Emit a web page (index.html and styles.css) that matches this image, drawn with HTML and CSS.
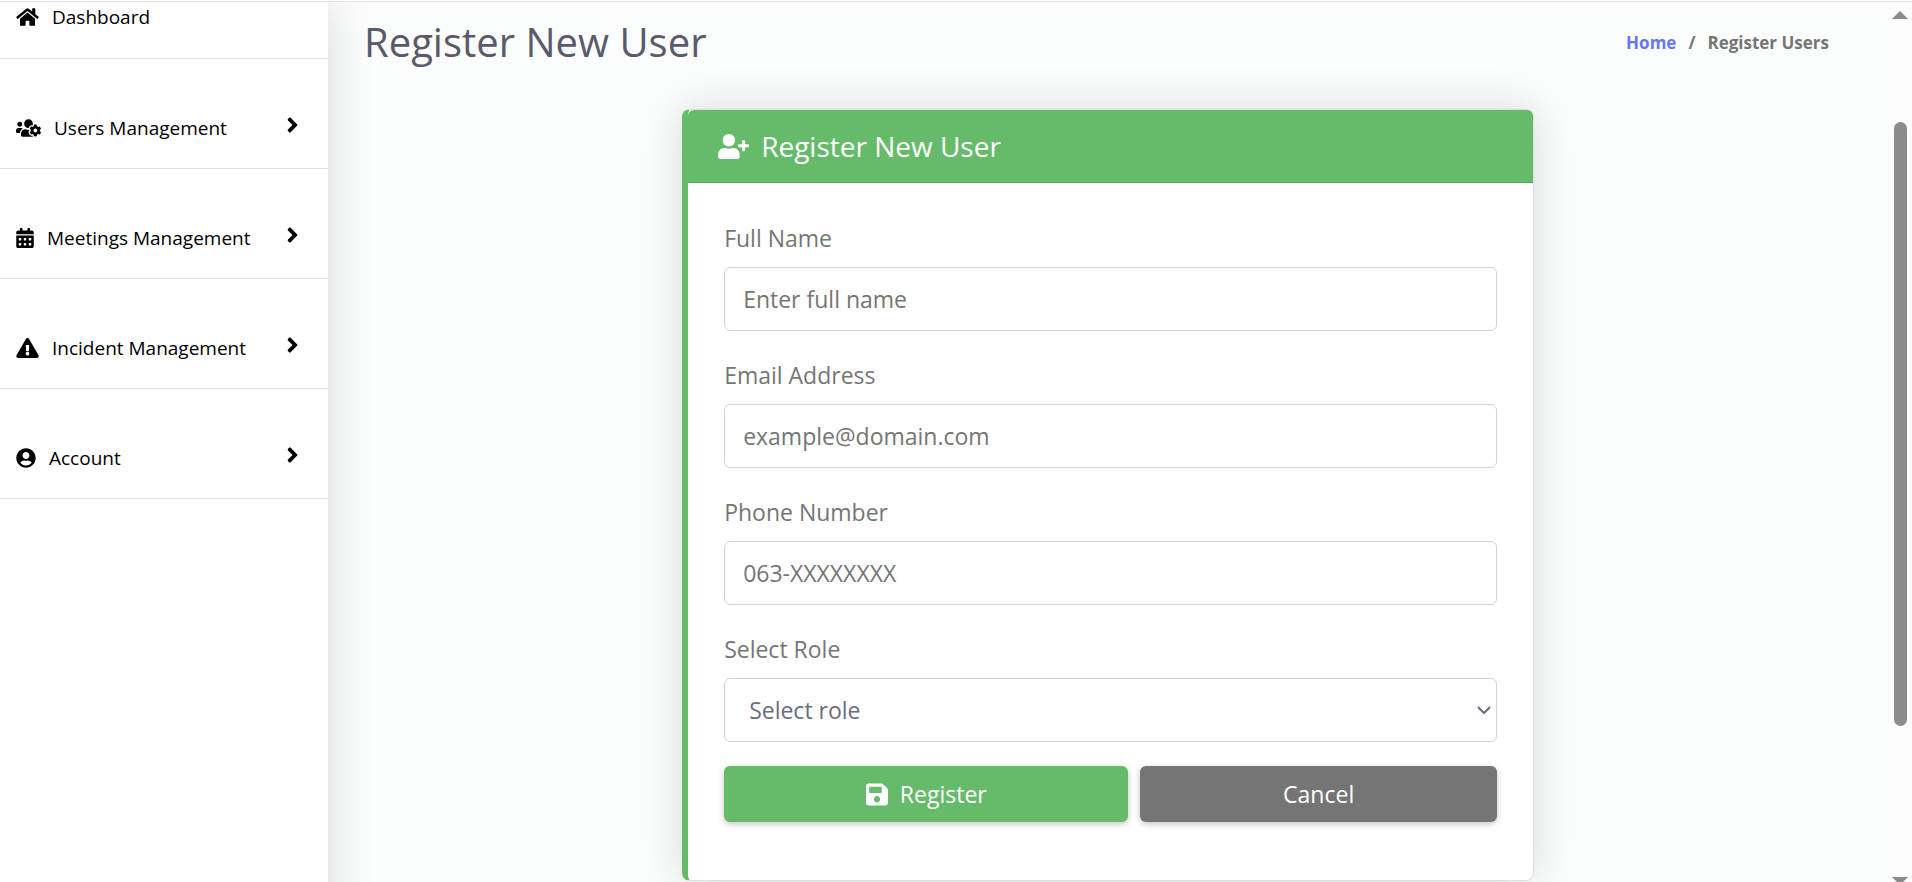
FILE: index.html
```html
<!DOCTYPE html>
<html lang="en">
<head>
<meta charset="utf-8">
<title>Register New User</title>
<link rel="stylesheet" href="styles.css">
</head>
<body>
<div class="topbar"></div>
<div class="layout">
  <nav class="sidebar" aria-label="Main">
    <ul class="menu">
      <li class="menu-item menu-item-first">
        <a class="menu-link" href="#">
          <svg class="icon icon-576" viewBox="0 0 576 512" aria-hidden="true"><path d="M280.37 148.26L96 300.11V464a16 16 0 0 0 16 16l112.06-.29a16 16 0 0 0 15.92-16V368a16 16 0 0 1 16-16h64a16 16 0 0 1 16 16v95.64a16 16 0 0 0 16 16.05L464 480a16 16 0 0 0 16-16V300L295.67 148.26a12.19 12.19 0 0 0-15.3 0zM571.6 251.47L488 182.56V44.05a12 12 0 0 0-12-12h-56a12 12 0 0 0-12 12v72.61L318.47 43a48 48 0 0 0-61 0L4.34 251.47a12 12 0 0 0-1.6 16.9l25.5 31A12 12 0 0 0 45.15 301l235.22-193.74a12.19 12.19 0 0 1 15.3 0L530.9 301a12 12 0 0 0 16.9-1.6l25.5-31a12 12 0 0 0-1.7-16.93z"/></svg>
          <span>Dashboard</span>
        </a>
      </li>
      <li class="menu-item">
        <a class="menu-link" href="#">
          <svg class="icon icon-640" viewBox="0 0 640 512" aria-hidden="true"><path d="M610.5 341.3c2.6-14.1 2.6-28.5 0-42.6l25.8-14.9c3-1.7 4.3-5.2 3.3-8.5-6.7-21.6-18.2-41.2-33.2-57.4-2.3-2.5-6-3.1-9-1.4l-25.8 14.9c-10.9-9.3-23.4-16.5-36.9-21.3v-29.8c0-3.4-2.4-6.4-5.7-7.1-22.3-5-45-4.8-66.2 0-3.3.7-5.7 3.7-5.7 7.1v29.8c-13.5 4.8-26 12-36.9 21.3l-25.8-14.9c-2.9-1.7-6.7-1.1-9 1.4-15 16.2-26.5 35.8-33.2 57.4-1 3.3.4 6.8 3.3 8.5l25.8 14.9c-2.6 14.1-2.6 28.5 0 42.6l-25.8 14.9c-3 1.7-4.3 5.2-3.3 8.5 6.7 21.6 18.2 41.1 33.2 57.4 2.3 2.5 6 3.1 9 1.4l25.8-14.9c10.9 9.3 23.4 16.5 36.9 21.3v29.8c0 3.4 2.4 6.4 5.7 7.1 22.3 5 45 4.8 66.2 0 3.3-.7 5.7-3.7 5.7-7.1v-29.8c13.5-4.8 26-12 36.9-21.3l25.8 14.9c2.9 1.7 6.7 1.1 9-1.4 15-16.2 26.5-35.8 33.2-57.4 1-3.3-.4-6.8-3.3-8.5l-25.8-14.9zM496 368.5c-26.8 0-48.5-21.8-48.5-48.5s21.8-48.5 48.5-48.5 48.5 21.8 48.5 48.5-21.7 48.5-48.5 48.5zM96 224c35.3 0 64-28.7 64-64s-28.7-64-64-64-64 28.7-64 64 28.7 64 64 64zm224 32c1.9 0 3.7-.5 5.6-.6 8.3-21.7 20.5-42.1 36.3-59.2 7.4-8 17.9-12.6 28.9-12.6 6.9 0 13.7 1.8 19.6 5.3l7.9 4.6c.8-.5 1.6-.9 2.4-1.4 7-14.6 11.2-30.8 11.2-48 0-61.9-50.1-112-112-112S208 82.1 208 144c0 61.9 50.1 112 112 112zm105.2 194.5c-2.3-1.2-4.6-2.6-6.8-3.9-8.2 4.8-15.3 9.8-27.5 9.8-10.9 0-21.4-4.6-28.9-12.6-18.3-19.8-32.3-43.9-40.2-69.6-10.7-34.5 24.9-49.7 25.8-50.3-.1-2.6-.1-5.2 0-7.8l-7.9-4.6c-3.8-2.2-7-5-9.8-8.1-3.3.2-6.5.6-9.8.6-24.6 0-47.6-6-68.5-16h-8.3C179.6 288 128 339.6 128 403.2V432c0 26.5 21.5 48 48 48h255.4c-3.7-6-6.2-12.8-6.2-20.3v-9.2zM173.1 274.6C161.5 263.1 145.6 256 128 256H64c-35.3 0-64 28.7-64 64v32c0 17.7 14.3 32 32 32h65.9c6.3-47.4 34.9-87.3 75.2-109.4z"/></svg>
          <span>Users Management</span>
          <svg class="chevron" viewBox="0 0 256 512" aria-hidden="true"><path d="M224.3 273l-136 136c-9.4 9.4-24.6 9.4-33.9 0l-22.6-22.6c-9.4-9.4-9.4-24.6 0-33.9l96.4-96.4-96.4-96.4c-9.4-9.4-9.4-24.6 0-33.9L54.3 103c9.4-9.4 24.6-9.4 33.9 0l136 136c9.5 9.4 9.5 24.6.1 34z"/></svg>
        </a>
      </li>
      <li class="menu-item">
        <a class="menu-link" href="#">
          <svg class="icon icon-448" viewBox="0 0 448 512" aria-hidden="true"><path fill-rule="evenodd" d="M400 64h-48V16c0-8.800-7.200-16-16-16h-32c-8.800 0-16 7.200-16 16v48H160V16c0-8.800-7.200-16-16-16h-32c-8.800 0-16 7.200-16 16v48H48C21.500 64 0 85.500 0 112v48h448v-48c0-26.500-21.500-48-48-48zM0 464c0 26.500 21.500 48 48 48h352c26.500 0 48-21.500 48-48V192H0zM76 256h40q12 0 12 12v40q0 12-12 12H76q-12 0-12-12v-40q0-12 12-12zM204 256h40q12 0 12 12v40q0 12-12 12h-40q-12 0-12-12v-40q0-12 12-12zM332 256h40q12 0 12 12v40q0 12-12 12h-40q-12 0-12-12v-40q0-12 12-12zM76 384h40q12 0 12 12v40q0 12-12 12H76q-12 0-12-12v-40q0-12 12-12zM204 384h40q12 0 12 12v40q0 12-12 12h-40q-12 0-12-12v-40q0-12 12-12zM332 384h40q12 0 12 12v40q0 12-12 12h-40q-12 0-12-12v-40q0-12 12-12z"/></svg>
          <span>Meetings Management</span>
          <svg class="chevron" viewBox="0 0 256 512" aria-hidden="true"><path d="M224.3 273l-136 136c-9.4 9.4-24.6 9.4-33.9 0l-22.6-22.6c-9.4-9.4-9.4-24.6 0-33.9l96.4-96.4-96.4-96.4c-9.4-9.4-9.4-24.6 0-33.9L54.3 103c9.4-9.4 24.6-9.4 33.9 0l136 136c9.5 9.4 9.5 24.6.1 34z"/></svg>
        </a>
      </li>
      <li class="menu-item">
        <a class="menu-link" href="#">
          <svg class="icon icon-576" viewBox="0 0 576 512" aria-hidden="true"><path d="M569.517 440.013C587.975 472.007 564.806 512 527.94 512H48.054c-36.937 0-59.999-40.055-41.577-71.987L246.423 23.985c18.467-32.009 64.72-31.951 83.154 0l239.94 416.028zM288 354c-25.405 0-46 20.595-46 46s20.595 46 46 46 46-20.595 46-46-20.595-46-46-46zm-43.673-165.346l7.418 136c.347 6.364 5.609 11.346 11.982 11.346h48.546c6.373 0 11.635-4.982 11.982-11.346l7.418-136c.375-6.874-5.098-12.654-11.982-12.654h-63.383c-6.884 0-12.356 5.78-11.981 12.654z"/></svg>
          <span>Incident Management</span>
          <svg class="chevron" viewBox="0 0 256 512" aria-hidden="true"><path d="M224.3 273l-136 136c-9.4 9.4-24.6 9.4-33.9 0l-22.6-22.6c-9.4-9.4-9.4-24.6 0-33.9l96.4-96.4-96.4-96.4c-9.4-9.4-9.4-24.6 0-33.9L54.3 103c9.4-9.4 24.6-9.4 33.9 0l136 136c9.5 9.4 9.5 24.6.1 34z"/></svg>
        </a>
      </li>
      <li class="menu-item">
        <a class="menu-link" href="#">
          <svg class="icon icon-496" viewBox="0 0 496 512" aria-hidden="true"><path d="M248 8C111 8 0 119 0 256s111 248 248 248 248-111 248-248S385 8 248 8zm0 96c48.6 0 88 39.4 88 88s-39.4 88-88 88-88-39.4-88-88 39.4-88 88-88zm0 344c-58.7 0-111.3-26.6-146.5-68.2 18.8-35.4 55.6-59.8 98.5-59.8 2.4 0 4.8.4 7.1 1.100 13 4.200 26.600 6.900 40.900 6.900 14.300 0 28-2.700 40.900-6.900 2.300-.7 4.700-1.100 7.100-1.100 42.900 0 79.700 24.400 98.500 59.800C359.300 421.400 306.700 448 248 448z"/></svg>
          <span>Account</span>
          <svg class="chevron" viewBox="0 0 256 512" aria-hidden="true"><path d="M224.3 273l-136 136c-9.4 9.4-24.6 9.4-33.9 0l-22.6-22.6c-9.4-9.4-9.4-24.6 0-33.9l96.4-96.4-96.4-96.4c-9.4-9.4-9.4-24.6 0-33.9L54.3 103c9.4-9.4 24.6-9.4 33.9 0l136 136c9.5 9.4 9.5 24.6.1 34z"/></svg>
        </a>
      </li>
    </ul>
  </nav>

  <main class="content">
    <header class="page-header">
      <h1 class="page-title">Register New User</h1>
      <nav class="breadcrumb" aria-label="Breadcrumb">
        <a class="breadcrumb-link" href="#">Home</a>
        <span>/</span>
        <span>Register Users</span>
      </nav>
    </header>

    <section class="card">
      <h2 class="card-header">
        <svg class="card-icon" viewBox="0 0 640 512" aria-hidden="true"><path d="M624 208h-64v-64c0-8.800-7.200-16-16-16h-32c-8.800 0-16 7.200-16 16v64h-64c-8.800 0-16 7.200-16 16v32c0 8.800 7.200 16 16 16h64v64c0 8.800 7.200 16 16 16h32c8.800 0 16-7.200 16-16v-64h64c8.800 0 16-7.200 16-16v-32c0-8.800-7.200-16-16-16zm-400 48c70.700 0 128-57.300 128-128S294.700 0 224 0 96 57.300 96 128s57.300 128 128 128zm89.600 32h-16.700c-22.200 10.200-46.900 16-72.900 16s-50.600-5.800-72.900-16h-16.700C60.200 288 0 348.200 0 422.400V464c0 26.500 21.500 48 48 48h352c26.500 0 48-21.500 48-48v-41.600c0-74.200-60.200-134.400-134.400-134.400z"/></svg>
        <span>Register New User</span>
      </h2>
      <form class="card-body">
        <div class="field">
          <label class="label" for="name">Full Name</label>
          <input class="control" id="name" type="text" placeholder="Enter full name">
        </div>
        <div class="field">
          <label class="label" for="email">Email Address</label>
          <input class="control" id="email" type="email" placeholder="example@domain.com">
        </div>
        <div class="field">
          <label class="label" for="phone">Phone Number</label>
          <input class="control" id="phone" type="tel" placeholder="063-XXXXXXXX">
        </div>
        <div class="field">
          <label class="label" for="role">Select Role</label>
          <div class="select-wrap">
            <select class="control control-select" id="role"><option>Select role</option></select>
            <svg class="select-arrow" viewBox="0 0 14 10" aria-hidden="true"><path d="M1 2l6 6 6-6"/></svg>
          </div>
        </div>
        <div class="actions">
          <button class="btn btn-primary" type="submit">
            <svg class="btn-icon" viewBox="0 0 448 512" aria-hidden="true"><path d="M433.941 129.941l-83.882-83.882A48 48 0 0 0 316.118 32H48C21.490 32 0 53.490 0 80v352c0 26.510 21.490 48 48 48h352c26.510 0 48-21.490 48-48V163.882a48 48 0 0 0-14.059-33.941zM224 416c-35.346 0-64-28.654-64-64 0-35.346 28.654-64 64-64s64 28.654 64 64c0 35.346-28.654 64-64 64zm96-304.520V212c0 6.627-5.373 12-12 12H76c-6.627 0-12-5.373-12-12V108c0-6.627 5.373-12 12-12h228.520c3.183 0 6.235 1.264 8.485 3.515l3.480 3.480A11.996 11.996 0 0 1 320 111.480z"/></svg>
            <span>Register</span>
          </button>
          <button class="btn btn-secondary" type="button">Cancel</button>
        </div>
      </form>
    </section>
  </main>

  <div class="scrollbar" aria-hidden="true">
    <svg class="scroll-arrow" viewBox="0 0 16 8"><path d="M8 0l8 8H0z"/></svg>
    <div class="scroll-track"><div class="scroll-thumb"></div></div>
    <svg class="scroll-arrow scroll-arrow-down" viewBox="0 0 16 8"><path d="M0 0h16L8 8z"/></svg>
  </div>
</div>
</body>
</html>
```
FILE: styles.css
```css
*,
*::before,
*::after {
  box-sizing: border-box;
}

body {
  margin: 0;
  height: 100vh;
  overflow: hidden;
  display: flex;
  flex-direction: column;
  background: #fbfdfc;
  color: #757575;
  font-family: "Open Sans", "Noto Sans", sans-serif;
  font-size: 23px;
}

.topbar {
  flex: none;
  height: 3px;
  background: #fff;
  border-bottom: 1px solid #fff;
  box-shadow: inset 0 -1px 0 #e0e0e0, 0 0 45px rgba(0, 0, 0, 0.03);
}

.layout {
  flex: 1;
  min-height: 0;
  display: flex;
}

/* Sidebar */
.sidebar {
  flex: none;
  width: 328px;
  margin-bottom: -60px;
  background: #fff;
  box-shadow: 0 0 45px rgba(0, 0, 0, 0.14);
  clip-path: inset(0 -60px 0 0);
}

.menu {
  margin: 0;
  padding: 0;
  list-style: none;
}

.menu-item {
  height: 110px;
  padding-top: 55px;
  border-bottom: 1px solid #e2e2e2;
}

.menu-item-first {
  height: 56px;
  padding-top: 0;
}

.menu-link {
  display: flex;
  align-items: center;
  gap: 13px;
  height: 28px;
  padding: 0 29px 0 16px;
  color: #000;
  font-size: 19px;
  text-decoration: none;
}

.icon {
  flex: none;
  height: 20px;
  fill: #000;
}

.icon-448 { width: 18px; }
.icon-496 { width: 20px; }
.icon-576 { width: 23px; }
.icon-640 { width: 25px; }

.chevron {
  flex: none;
  width: 13px;
  height: 24px;
  margin: 0 0 6px auto;
  fill: #000;
}

/* Main area */
.content {
  flex: 1;
  min-width: 0;
}

.page-header {
  display: flex;
  align-items: center;
  justify-content: space-between;
  height: 78px;
  padding: 0 59px 0 36px;
}

.page-title {
  margin: 0;
  color: #5a5a6a;
  font-size: 40px;
  font-weight: 400;
  line-height: 56px;
}

.breadcrumb {
  display: flex;
  gap: 12px;
  color: #757575;
  font-size: 17px;
  font-weight: 700;
}

.breadcrumb-link {
  color: #6777ef;
  text-decoration: none;
}

/* Card */
.card {
  width: 54.6%;
  margin: 28px auto 0;
  background: #fff;
  border: 1px solid #dcdede;
  border-left: 6px solid #66bb6a;
  border-radius: 8px;
  box-shadow: 0 0 45px rgba(0, 0, 0, 0.14);
}

.card-header {
  display: flex;
  align-items: center;
  gap: 12px;
  height: 73px;
  margin: 0;
  padding: 0 30px;
  background: #66bb6a;
  border-bottom: 1px solid #5aa65e;
  border-radius: 6px 6px 0 0;
  color: #fff;
  font-size: 28px;
  font-weight: 400;
}

.card-icon {
  width: 31px;
  height: 25px;
  fill: #fff;
}

.card-body {
  padding: 35px 36px 58px;
}

.field {
  margin-bottom: 24px;
}

.label {
  display: block;
  margin-bottom: 9px;
  line-height: 40px;
}

.control {
  display: block;
  width: 100%;
  height: 64px;
  padding: 0 18px;
  background: #fff;
  border: 1px solid #d1d1e0;
  border-radius: 6px;
  color: #6c6c80;
  font: inherit;
}

.control::placeholder {
  color: #757575;
  opacity: 1;
}

.select-wrap {
  position: relative;
}

.control-select {
  appearance: none;
  padding-left: 24px;
}

.select-arrow {
  position: absolute;
  right: 6px;
  top: 27px;
  width: 14px;
  height: 10px;
  fill: none;
  stroke: #6c6c80;
  stroke-width: 2;
  pointer-events: none;
}

.actions {
  display: flex;
  gap: 12px;
}

.btn {
  display: flex;
  align-items: center;
  justify-content: center;
  gap: 12px;
  height: 56px;
  padding: 0;
  border: 0;
  border-radius: 6px;
  box-shadow: 0 2px 6px rgba(0, 0, 0, 0.24);
  color: #fff;
  font: inherit;
}

.btn-primary {
  flex: 405;
  background: #66bb6a;
}

.btn-secondary {
  flex: 357;
  background: #757575;
}

.btn-icon {
  width: 22px;
  height: 25px;
  fill: #fff;
}

/* Scrollbar */
.scrollbar {
  flex: none;
  width: 24px;
  display: flex;
  flex-direction: column;
  align-items: center;
  padding-top: 8px;
  background: #fcfcfc;
}

.scroll-arrow {
  flex: none;
  width: 16px;
  height: 8px;
  fill: #8b8b8b;
}

.scroll-arrow-down {
  margin-bottom: -3px;
}

.scroll-track {
  flex: 1;
  padding-top: 103px;
}

.scroll-thumb {
  width: 13px;
  height: 80%;
  background: #8b8b8b;
  border-radius: 7px;
}
```
